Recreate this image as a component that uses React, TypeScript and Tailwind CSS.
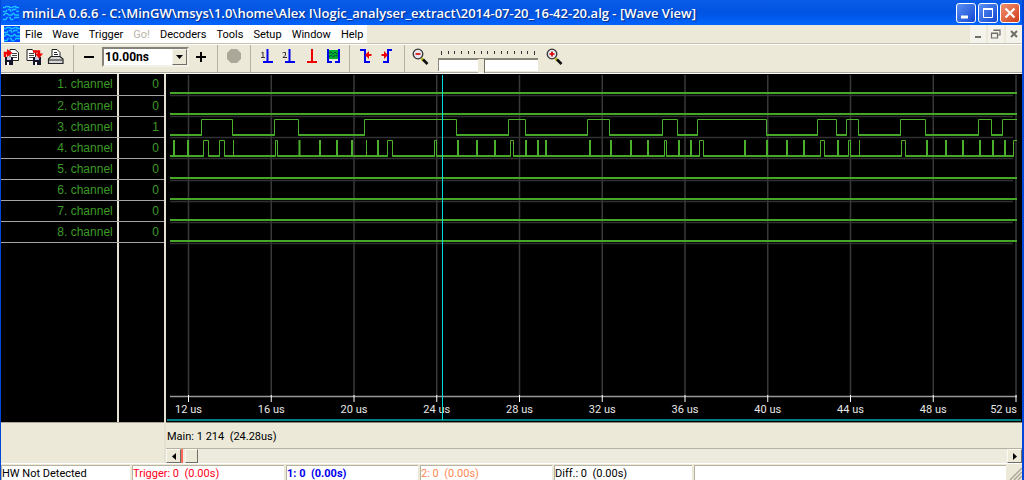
import type { ReactNode } from 'react';

const TITLE =
  'miniLA 0.6.6 - C:\\MinGW\\msys\\1.0\\home\\Alex I\\logic_analyser_extract\\2014-07-20_16-42-20.alg - [Wave View]';

const menus = ['File', 'Wave', 'Trigger', 'Go!', 'Decoders', 'Tools', 'Setup', 'Window', 'Help'];

const channels = [
  { id: 1, value: 0 },
  { id: 2, value: 0 },
  { id: 3, value: 1 },
  { id: 4, value: 0 },
  { id: 5, value: 0 },
  { id: 6, value: 0 },
  { id: 7, value: 0 },
  { id: 8, value: 0 },
];

// All plot coordinates are relative to the wave panel (856 x 348)
const PLOT_W = 856;
const PLOT_H = 348;
const LEFT = 4;
const RIGHT = 851;

const ticks = [12, 16, 20, 24, 28, 32, 36, 40, 44, 48, 52].map((us, i) => ({
  us,
  x: 22.5 + i * 82.75,
}));

// [rise, fall] pairs
const channel3 = [
  [35.5, 66.5], [108.5, 132.5], [198.5, 290.5], [342.5, 359.5], [421.5, 443.5], [496.5, 511.5],
  [531.5, 600.5], [651.5, 670.5], [680.5, 692.5], [734.5, 759.5], [812.5, 825.5], [836.5, 851],
];

const channel4 = [
  [37.5, 42.5], [53.5, 58.5], [109.5, 111.5], [221.5, 226.5], [268.5, 270.5], [344.5, 347.5],
  [498.5, 500.5], [533.5, 537.5], [654.5, 658.5], [682.5, 684.5], [735.5, 739.5], [847.5, 851],
];

const spikes = [
  8, 22, 133.5, 154, 171, 186, 212, 292, 311, 329, 360, 372, 380, 424, 445, 465, 482, 513, 525,
  579, 601, 621, 638, 672, 761, 780, 797, 814, 827, 839,
];

const thinSpikes = [67.5, 200.5, 693.5];

const trace = (edges: number[][], high: number, low: number) => {
  let d = `M${LEFT} ${low}`;
  edges.forEach(([rise, fall]) => {
    d += `H${rise}V${high}H${fall}`;
    if (fall < RIGHT) d += `V${low}`;
  });
  return d;
};

// the low level is drawn heavier than the rest of the trace
const lowLevel = (edges: number[][], y: number) => {
  let d = `M${LEFT} ${y}`;
  edges.forEach(([rise, fall]) => {
    d += `H${rise}M${fall} ${y}`;
  });
  return d;
};

const rowBase = (i: number) => 19 + Math.round(i * 21.15);

const Logo = () => (
  <svg width="16" height="16" viewBox="0 0 16 16" className="shrink-0" aria-hidden="true">
    <rect width="16" height="16" fill="#0048ff" />
    <g fill="none" stroke="#19c4ff" strokeWidth="1.3">
      <path d="M0 2.500h2l1-1h3l1 1h2l2-1h2v1h3" />
      <path d="M0 6.500h3l1-2h3l1 2h1l1-2h3l1 2h2" strokeDasharray="5 1" />
      <path d="M0 10h1l1-1.500h2L6 10h3l1-1.500h1l1 1.500h4" />
      <path d="M0 14.500h3l1-2h3l1 2h2l2-2h4" strokeDasharray="6 1" />
    </g>
  </svg>
);

const ToolButton = ({ label, children }: { label: string; children: ReactNode }) => (
  <button type="button" aria-label={label} className="mt-[3px] h-[18px] w-[22px] shrink-0">
    <svg width="22" height="18" viewBox="0 0 22 18">
      {children}
    </svg>
  </button>
);

const Separator = () => (
  <div className="mx-[5px] w-px shrink-0 self-stretch border-r border-[#b5b2a2]" />
);

const Disk = ({ x }: { x: number }) => (
  <g>
    <rect x={x} y="9" width="8" height="8" fill="#15152a" />
    <rect x={x + 2} y="9" width="4" height="3" fill="#c8c8e0" />
    <rect x={x + 2} y="14" width="2" height="3" fill="#fff" />
  </g>
);

const Magnifier = ({ plus }: { plus?: boolean }) => (
  <>
    <path d="M11.500 10.500l2 2" stroke="#b8b800" strokeWidth="2.500" />
    <path d="M13 11.500l4.500 4.500" stroke="#111" strokeWidth="2.600" />
    <circle cx="8" cy="6" r="4.800" fill="#e4e7ee" stroke="#333" strokeWidth="1.300" />
    <path d="M5.500 6h5" stroke="#e00000" strokeWidth="1.600" />
    {plus && <path d="M8 3.500v5" stroke="#e00000" strokeWidth="1.600" />}
  </>
);

const TitleBar = () => (
  <header className="flex h-[25px] items-center bg-linear-to-b from-[#0b5ce8] via-[#0054e3] via-50% to-[#0064fc] pr-[2px] pl-[2px]">
    <Logo />
    <h1 className="ml-[3px] flex-1 truncate font-['Open_Sans','Noto_Sans',sans-serif] text-[13px] leading-[20px] font-semibold text-white [text-shadow:1px_1px_1px_#0a2a80]">
      {TITLE}
    </h1>
    <div className="flex gap-[2px]">
      <button type="button" aria-label="Minimize" className="h-[20px] w-[20px] rounded-[3px] border border-white bg-linear-to-br from-[#5c8ff5] to-[#1545cf]">
        <svg width="18" height="18" viewBox="0 0 18 18">
          <path d="M4 13h7" stroke="#fff" strokeWidth="3" />
        </svg>
      </button>
      <button type="button" aria-label="Maximize" className="h-[20px] w-[20px] rounded-[3px] border border-white bg-linear-to-br from-[#5c8ff5] to-[#1545cf]">
        <svg width="18" height="18" viewBox="0 0 18 18" fill="none" stroke="#fff">
          <path d="M4.500 4.500h9v9h-9z" />
          <path d="M4 5h10" strokeWidth="2" />
        </svg>
      </button>
      <button type="button" aria-label="Close" className="h-[20px] w-[20px] rounded-[3px] border border-white bg-linear-to-br from-[#f0906f] to-[#d03a10]">
        <svg width="18" height="18" viewBox="0 0 18 18">
          <path d="M4.500 4.500l9 9M13.500 4.500l-9 9" stroke="#fff" strokeWidth="2.200" />
        </svg>
      </button>
    </div>
  </header>
);

const MenuBar = () => (
  <nav className="flex h-[19px] items-center justify-between border-b border-[#c5c2b0]">
    <div className="flex h-full items-center bg-white pr-[4px] pl-[3px]">
      <Logo />
      <div className="ml-[5px] flex gap-[10px]">
        {menus.map((name) => (
          <button
            key={name}
            type="button"
            disabled={name === 'Go!'}
            className="pt-px leading-[17px] text-black disabled:text-[#b8b5a5]"
          >
            {name}
          </button>
        ))}
      </div>
    </div>
    <div className="flex h-full gap-[2px]">
      <button type="button" aria-label="Minimize document" className="w-[16px] bg-[#f4f3ec]">
        <svg width="16" height="16" viewBox="0 0 16 16">
          <path d="M5 11h6" stroke="#6e6d66" strokeWidth="2" />
        </svg>
      </button>
      <button type="button" aria-label="Restore document" className="w-[16px] bg-[#f4f3ec]">
        <svg width="16" height="16" viewBox="0 0 16 16" fill="none" stroke="#6e6d66">
          <path d="M3.500 7h6v5h-6zM3 7.500h7M6 5V4h6v5h-2M5.500 4.500h7" strokeWidth="1.200" />
        </svg>
      </button>
      <button type="button" aria-label="Close document" className="w-[16px] bg-[#f4f3ec]">
        <svg width="16" height="16" viewBox="0 0 16 16">
          <path d="M5 5l6 6M11 5l-6 6" stroke="#6e6d66" strokeWidth="2" />
        </svg>
      </button>
    </div>
  </nav>
);

const Toolbar = () => (
  <div className="flex h-[29px] items-start border-t border-b border-t-white border-b-[#aca899] pl-px">
    <ToolButton label="Open">
      <path d="M8 1.500h5l3.500 3v8H8z" fill="#fff" stroke="#222" />
      <path d="M10 5.500h5M10 7.500h5M10 9.500h5" stroke="#444" />
      <Disk x={3} />
      <path d="M3 9V5h3" fill="none" stroke="#f00000" strokeWidth="2.400" />
      <path d="M5 1l5.500 4L5 9z" fill="#f00000" />
    </ToolButton>
    <ToolButton label="Save">
      <path d="M3 1.500h5l3.500 3v8H3z" fill="#fff" stroke="#222" />
      <path d="M5 5.500h5M5 7.500h5M5 9.500h5" stroke="#444" />
      <Disk x={9} />
      <path d="M9 3.500h6V6" fill="none" stroke="#f00000" strokeWidth="2.400" />
      <path d="M11 5.500h8l-4 5z" fill="#f00000" />
    </ToolButton>
    <ToolButton label="Print">
      <path d="M6 9V1.500h5l3 3V9" fill="#fff" stroke="#222" />
      <path d="M8 4.500h3M8 6.500h4" stroke="#222" />
      <path d="M2.500 11L5 8.500h9l3 2.500v4.500H2.500z" fill="#d5d5d5" stroke="#222" strokeWidth="1.200" />
      <path d="M2.500 12h14" stroke="#222" />
    </ToolButton>
    <Separator />
    <button type="button" aria-label="Decrease time base" className="mt-[3px] h-[18px] w-[20px] shrink-0">
      <svg width="20" height="18" viewBox="0 0 20 18">
        <path d="M5 9h10" stroke="#000" strokeWidth="2" />
      </svg>
    </button>
    <div className="relative mx-[3px] mt-[2px] h-[20px] w-[87px] shrink-0">
      <select
        aria-label="Time base"
        className="h-full w-full appearance-none border-2 border-[#85827a] border-r-[#f4f2e8] border-b-[#f4f2e8] bg-white pl-px text-[12px] leading-[14px] font-bold text-black"
      >
        <option>10.00ns</option>
      </select>
      <span className="pointer-events-none absolute top-[2px] right-[2px] flex h-[16px] w-[15px] items-center justify-center border border-[#f8f7f0] border-r-[#716f64] border-b-[#716f64] bg-[#ece9d8]">
        <svg width="7" height="4" viewBox="0 0 7 4">
          <path d="M0 0h7L3.500 4z" />
        </svg>
      </span>
    </div>
    <button type="button" aria-label="Increase time base" className="mt-[3px] h-[18px] w-[20px] shrink-0">
      <svg width="20" height="18" viewBox="0 0 20 18">
        <path d="M4 9h10M9 4v10" stroke="#000" strokeWidth="2" />
      </svg>
    </button>
    <Separator />
    <ToolButton label="Stop">
      <path d="M8 1h6l4 4v6l-4 4H8l-4-4V5z" fill="#aca899" />
    </ToolButton>
    <Separator />
    <ToolButton label="Go to cursor 1">
      <path d="M11.500 1v12M7 14h10" stroke="#0000f0" strokeWidth="2" />
      <path d="M5.500 5l1.500-1V9M5 9.500h4" fill="none" stroke="#333" />
    </ToolButton>
    <ToolButton label="Go to cursor 2">
      <path d="M11.500 1v12M7 14h10" stroke="#0000f0" strokeWidth="2" />
      <path d="M4.500 5l1-.5h2V7L5 9.500H9" fill="none" stroke="#333" />
    </ToolButton>
    <ToolButton label="Go to trigger">
      <path d="M12 1v12M7 14h10" stroke="#f00000" strokeWidth="2" />
    </ToolButton>
    <ToolButton label="Fit between cursors">
      <rect x="6" y="2" width="11" height="9" fill="#00b030" />
      <path d="M7 5l2-1 2 2 2-2 2 2 2-1M7 8.500l2-1 2 1 3-1 3 1" fill="none" stroke="#053" />
      <path d="M6 1v12M17 1v12M5 14h5M13 14h5" stroke="#0000f0" strokeWidth="2" />
    </ToolButton>
    <Separator />
    <ToolButton label="Previous edge">
      <path d="M5 2h5v12h5" fill="none" stroke="#0000f0" strokeWidth="2" />
      <path d="M10 7l4-4v3h2.500v2H14v3z" fill="#f00000" />
    </ToolButton>
    <ToolButton label="Next edge">
      <path d="M6 14h5V2h4" fill="none" stroke="#0000f0" strokeWidth="2" />
      <path d="M11 7L7 3v3H4.500v2H7v3z" fill="#f00000" />
    </ToolButton>
    <Separator />
    <ToolButton label="Zoom out">
      <Magnifier />
    </ToolButton>
    <div className="mx-[6px] w-[100px] shrink-0 pt-[6px]">
      <div className="flex h-[4px] justify-between px-[3px]">
        {Array.from({ length: 15 }, (_, i) => (
          <span key={i} className="h-[3px] w-px bg-[#333] first:h-[4px] last:h-[4px]" />
        ))}
      </div>
      <input
        type="range"
        aria-label="Zoom"
        min={0}
        max={14}
        defaultValue={6}
        className="mt-[3px] block h-[13px] w-full appearance-none border-t-2 border-l border-[#8a877b] bg-white [&::-webkit-slider-thumb]:h-[14px] [&::-webkit-slider-thumb]:w-[7px] [&::-webkit-slider-thumb]:appearance-none [&::-webkit-slider-thumb]:border-r [&::-webkit-slider-thumb]:border-[#716f64] [&::-webkit-slider-thumb]:bg-[#ece9d8]"
      />
    </div>
    <ToolButton label="Zoom in">
      <Magnifier plus />
    </ToolButton>
  </div>
);

const ChannelList = () => (
  <table className="h-[169px] w-full table-fixed border-collapse text-right font-['Liberation_Sans',Arial,sans-serif] text-[12px] leading-[14px] text-[#3c9a26]">
    <tbody>
      {channels.map(({ id, value }) => (
        <tr key={id} className="h-[21px] border-b border-[#a5a5a5]">
          <th scope="row" className="w-[117px] p-0 pr-[6px] text-right font-normal">
            {id}. channel
          </th>
          <td className="w-[45px] p-0 pr-[5px]">{value}</td>
        </tr>
      ))}
    </tbody>
  </table>
);

const WavePlot = () => (
  <svg width="100%" height={PLOT_H} className="block bg-black" role="img" aria-label="Wave view">
    <svg viewBox={`0 0 ${PLOT_W} ${PLOT_H}`} width="100%" height={PLOT_H} preserveAspectRatio="none">
      {/* grid */}
      {ticks.map(({ us, x }) => (
        <path key={us} d={`M${x} 1V322`} stroke="#383838" strokeWidth="1.500" />
      ))}
      {channels.map(({ id }, i) => (
        <path key={id} d={`M${LEFT} ${rowBase(i) + 2.5}H847`} stroke="#303030" strokeWidth="1.500" />
      ))}

      {/* idle channels */}
      {channels.map(({ id }, i) =>
        id === 3 || id === 4 ? null : (
          <path key={id} d={`M${LEFT} ${rowBase(i)}H${RIGHT}`} stroke="#46a628" strokeWidth="2" />
        )
      )}

      <g fill="none" stroke="#4cb02c">
        <path d={trace(channel3, 45.5, 61.5)} />
        <path d={lowLevel(channel3, 61)} stroke="#46a628" strokeWidth="2" />
        <path d={trace(channel4, 66.5, 82.5)} />
        <path d={lowLevel(channel4, 82)} stroke="#46a628" strokeWidth="2" />
        {spikes.map((x) => (
          <path key={x} d={`M${x} 66V83`} strokeWidth="2" />
        ))}
        {thinSpikes.map((x) => (
          <path key={x} d={`M${x} 66V83`} />
        ))}
      </g>

      {/* time axis */}
      <path d={`M${LEFT} 322.5H${RIGHT}`} stroke="#989898" strokeWidth="1.500" />
      {ticks.map(({ us, x }) => (
        <path key={us} d={`M${x} 321V328`} stroke="#fff" />
      ))}
      <path d="M1 346H855" stroke="#008080" strokeWidth="2" />
    </svg>

    {ticks.map(({ us, x }) => (
      <text
        key={us}
        x={us === 52 ? `${(RIGHT / PLOT_W) * 100}%` : `${(x / PLOT_W) * 100}%`}
        y="339"
        fill="#e8e8e8"
        fontSize="11"
        textAnchor={us === 52 ? 'end' : 'middle'}
      >
        {us} us
      </text>
    ))}

    <svg viewBox={`0 0 ${PLOT_W} ${PLOT_H}`} width="100%" height={PLOT_H} preserveAspectRatio="none">
      <path d="M276.500 1V346" stroke="#00dcdc" />
    </svg>
  </svg>
);

const ScrollBar = () => (
  <div className="flex h-[15px] items-stretch border-t border-[#b5b2a2] bg-[#edebdd]">
    <button type="button" aria-label="Scroll left" className="flex w-[15px] items-center justify-center border border-[#fbfaf5] border-r-[#716f64] border-b-[#716f64] bg-[#ece9d8]">
      <svg width="4" height="7" viewBox="0 0 4 7">
        <path d="M4 0v7L0 3.500z" />
      </svg>
    </button>
    <div className="flex flex-1">
      <span className="w-[2px] bg-[#ff6a5a]" />
      <span className="ml-[2px] w-[13px] border border-[#fbfaf5] border-r-[#716f64] border-b-[#716f64] bg-[#ece9d8]" />
    </div>
    <button type="button" aria-label="Scroll right" className="flex w-[15px] items-center justify-center border border-[#fbfaf5] border-r-[#716f64] border-b-[#716f64] bg-[#ece9d8]">
      <svg width="4" height="7" viewBox="0 0 4 7">
        <path d="M0 0v7l4-3.500z" />
      </svg>
    </button>
  </div>
);

const StatusBar = () => (
  <footer className="flex h-[17px] gap-[2px] border-t border-white pt-px leading-[15px] whitespace-pre [&>p]:border-t [&>p]:border-l [&>p]:border-[#b5b2a2] [&>p]:bg-white">
    <p className="w-[129px]">HW Not Detected</p>
    <p className="w-[152px] text-[#ff0020]">Trigger: 0  (0.00s)</p>
    <p className="w-[132px] font-bold text-[#0000f0]">1: 0  (0.00s)</p>
    <p className="w-[132px] text-[#ff8850]">2: 0  (0.00s)</p>
    <p className="w-[138px]">Diff.: 0  (0.00s)</p>
    <p className="flex-1" />
    <svg width="14" height="15" viewBox="0 0 14 15">
      <path d="M2 15L14 3M6 15l8-8M10 15l4-4" stroke="#aca899" strokeWidth="1.500" />
    </svg>
  </footer>
);

export default function App() {
  return (
    <div className="flex min-h-screen flex-col border-r-2 border-l border-[#0046d8] bg-[#ece9d8] font-[Roboto,'Liberation_Sans',sans-serif] text-[11px] text-black">
      <TitleBar />
      <MenuBar />
      <Toolbar />

      <main className="flex flex-1 border-t border-white">
        <section className="flex w-[165px] shrink-0 flex-col border-r-2 border-[#e4e1d2]">
          {/* column divider is painted down the whole panel, below the last row too */}
          <div className="h-[348px] bg-black bg-linear-to-r from-[#e4e1d2] to-[#e4e1d2] bg-[length:2px_100%] bg-[position:116px_0] bg-no-repeat">
            <ChannelList />
          </div>
          <div className="flex-1 border-t border-[#aca899]" />
        </section>

        <section className="flex min-w-0 flex-1 flex-col">
          <WavePlot />
          <div className="flex flex-1 flex-col justify-between border-t border-[#8a877b]">
            <p className="pt-[6px] pl-[1px] leading-[16px] whitespace-pre">Main: 1 214  (24.28us)</p>
            <ScrollBar />
          </div>
        </section>
      </main>

      <StatusBar />
    </div>
  );
}
